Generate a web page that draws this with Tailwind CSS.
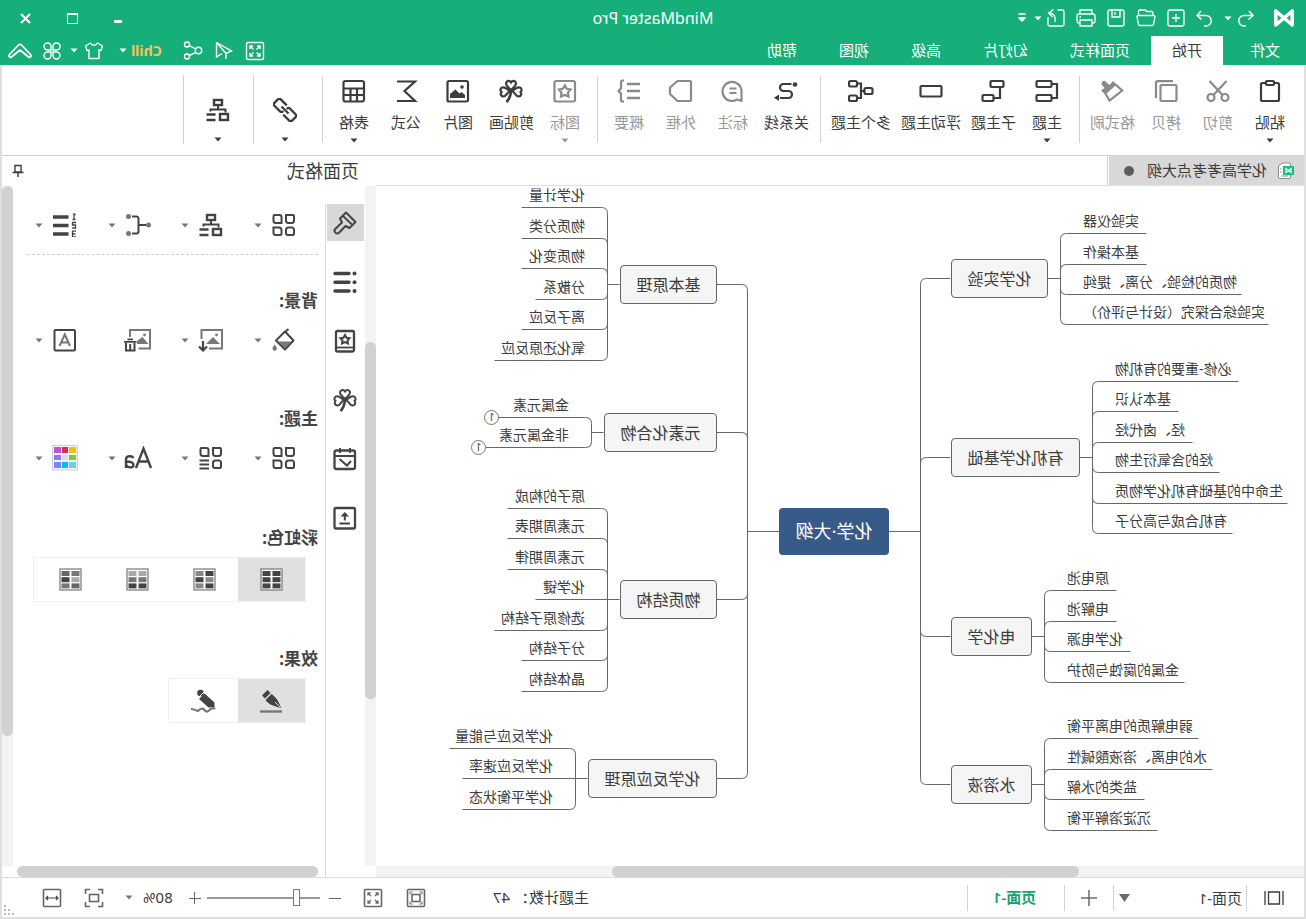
<!DOCTYPE html>
<html lang="zh-CN">
<head>
<meta charset="utf-8">
<title>MindMaster Pro</title>
<script src="https://cdn.jsdelivr.net/npm/@tailwindcss/browser@4"></script>
</head>
<body class="overflow-hidden">

<!-- Icon set, 24-unit grid -->
<svg class="hidden" aria-hidden="true">
  <symbol id="logo" viewBox="0 0 24 24"><path d="M3.800 5V19L20.200 5V19z" stroke-width="3.600" stroke-linejoin="round"/></symbol>
  <symbol id="undo" viewBox="0 0 24 24"><path d="M9 5L5 9.500L9.500 13.500M5 9.500H14a5 5 0 0 1 0 10.500H12" stroke-width="1.500"/></symbol>
  <symbol id="redo" viewBox="0 0 24 24"><path d="M15 5L19 9.500L14.500 13.500M19 9.500H10a5 5 0 0 0 0 10.500H12" stroke-width="1.500"/></symbol>
  <symbol id="new" viewBox="0 0 24 24"><rect x="4" y="4" width="16" height="16" rx="2"/><path d="M12 8v8M8 12h8"/></symbol>
  <symbol id="open" viewBox="0 0 24 24"><path d="M5 9.500V7a1.500 1.500 0 0 1 1.500-1.500H11l2-1.500h5a1.500 1.500 0 0 1 1.500 1.500V9.500M4 9.500H20a1 1 0 0 1 1 1.200L19.500 18.500a1.500 1.500 0 0 1-1.500 1H6a1.500 1.500 0 0 1-1.500-1L3 10.700a1 1 0 0 1 1-1.200z"/></symbol>
  <symbol id="save" viewBox="0 0 24 24"><rect x="4" y="4" width="16" height="16" rx="2"/><path d="M8 4v7h8V4M13 6v3"/></symbol>
  <symbol id="print" viewBox="0 0 24 24"><path d="M6 8V4h12v4M6 17H4.500a1.500 1.500 0 0 1-1.500-1.500V10a2 2 0 0 1 2-2h14a2 2 0 0 1 2 2v5.500a1.500 1.500 0 0 1-1.500 1.500H18M6 14h12v6H6zM17 11h1.500"/></symbol>
  <symbol id="export" viewBox="0 0 24 24"><path d="M10.500 4H5.500A1.500 1.500 0 0 0 4 5.500v13A1.500 1.500 0 0 0 5.500 20h13a1.500 1.500 0 0 0 1.500-1.500V11M13 16c-1-5 1-9 6-9M14.500 3.500L19.500 7L15.500 11"/></symbol>
  <symbol id="caret" viewBox="0 0 8 5"><path d="M.5.5h7L4 4.500z" fill="currentColor" stroke="none"/></symbol>
  <symbol id="more" viewBox="0 0 8 10"><path d="M.5 1h7" stroke-width="1.500"/><path d="M.5 4h7v1.500L4 9 .5 5.500z" fill="currentColor" stroke="none"/></symbol>
  <symbol id="expand" viewBox="0 0 24 24"><rect x="3.500" y="3.500" width="17" height="17" rx="1.500"/><path d="M10.500 10.500L7 7M7 10V7h3M13.500 10.500L17 7M14 7h3v3M10.500 13.500L7 17M7 14v3h3M13.500 13.500L17 17M17 14v3h-3"/></symbol>
  <symbol id="plane" viewBox="0 0 24 24"><path d="M19.500 3.500L4.500 12L10 14.500zM19.500 3.500V18L14 14.500M19.500 3.500L10 14.500V20"/></symbol>
  <symbol id="share" viewBox="0 0 24 24"><circle cx="6.500" cy="11.500" r="3.200"/><circle cx="18" cy="5.500" r="2.500"/><circle cx="18" cy="17.500" r="2.500"/><path d="M9.300 10L15.800 6.500M9 13.300l6.800 3.200"/></symbol>
  <symbol id="shirt" viewBox="0 0 24 24"><path d="M8.500 4C10 7 14 7 15.500 4L20.500 7L19 11.500L17 11V19.500H7V11L5 11.500L3.500 7z" stroke-linejoin="round"/></symbol>
  <symbol id="apps" viewBox="0 0 24 24"><path d="M11 11H7.300A3.500 3.500 0 1 1 11 7.500zM13 11V7.500A3.500 3.500 0 1 1 16.500 11zM11 13V16.500A3.500 3.500 0 1 1 7.500 13zM13 13H16.500A3.500 3.500 0 1 1 13 16.500z"/></symbol>
  <symbol id="collapse" viewBox="0 0 24 24"><path d="M1.500 15.500L10.500 6a2 2 0 0 1 3 0L22.500 15.500a1.500 1.500 0 0 1-2.300 2.200L12 11L3.800 17.700A1.500 1.500 0 0 1 1.500 15.500z" stroke-linejoin="round" stroke-width="1.800"/></symbol>

  <symbol id="paste" viewBox="0 0 24 24"><rect x="3" y="4" width="18" height="18" rx="1.500"/><rect x="8" y="2" width="8" height="4" rx="1" fill="white"/></symbol>
  <symbol id="cut" viewBox="0 0 24 24"><circle cx="5" cy="18.500" r="3.500"/><circle cx="19" cy="18.500" r="3.500"/><path d="M7.500 16L20.500 2M16.500 16L3.500 2"/></symbol>
  <symbol id="copy" viewBox="0 0 24 24"><rect x="1.500" y="6" width="16" height="16" rx="1"/><path d="M5 2.200H20.500a1.500 1.500 0 0 1 1.500 1.500V19"/></symbol>
  <symbol id="painter" viewBox="0 0 24 24"><path d="M9 5L1.800 11.500L14.500 21.500L20 12"/><path d="M11 2L14.500 6L17.500 3.500A2.600 2.600 0 1 1 21.500 6.500L19.500 9L23 11.500L18.500 15.500L7.500 5.500z" fill="currentColor" stroke="none"/></symbol>
  <symbol id="topic" viewBox="0 0 24 24"><rect x="7.500" y="2" width="15" height="6" rx="1"/><rect x="7.500" y="16" width="15" height="6" rx="1"/><path d="M7 5H2V19H7"/></symbol>
  <symbol id="subtopic" viewBox="0 0 24 24"><rect x="1.500" y="2" width="13" height="6" rx="1"/><rect x="11.500" y="16" width="11" height="6" rx="1"/><path d="M5 8V19H11"/></symbol>
  <symbol id="floating" viewBox="0 0 24 24"><rect x="1.500" y="7" width="21" height="10.500" rx="1"/></symbol>
  <symbol id="multi" viewBox="0 0 26 24"><rect x="1.500" y="9" width="8" height="6" rx="1.500"/><rect x="17" y="2" width="8" height="5.500" rx="1.500"/><rect x="17" y="16.500" width="8" height="5.500" rx="1.500"/><path d="M10 12H13M17 4.500H13V19H17"/></symbol>
  <symbol id="relation" viewBox="0 0 24 24"><circle cx="3" cy="5.500" r="2.300" fill="currentColor" stroke="none"/><path d="M17.500 5H9.500a3.500 3.500 0 0 0-3.500 3.500" stroke="none"/><path d="M6.500 5H14.500a3.500 3.500 0 0 1 0 7H9.500a3.500 3.500 0 0 0 0 7H18"/><path d="M19 15.500V22L24 18.700z" fill="currentColor" stroke="none"/></symbol>
  <symbol id="callout" viewBox="0 0 24 24"><path d="M3.500 22V12A9.500 9.500 0 1 1 8 20.500z" stroke-linejoin="round"/><path d="M8.500 9.500h7M8.500 14h7"/></symbol>
  <symbol id="boundary" viewBox="0 0 24 24"><path d="M2 3a1 1 0 0 1 1-1H15.500L23 8.500V15L15.500 22H3a1 1 0 0 1-1-1z" stroke-linejoin="round"/></symbol>
  <symbol id="summary" viewBox="0 0 24 24"><path d="M1 5h13M1 12h13M1 19h13" stroke-width="2.300"/><path d="M17 1.500h1.500a1.500 1.500 0 0 1 1.500 1.500V9.500L22.500 12L20 14.500V21a1.500 1.500 0 0 1-1.500 1.500H17"/></symbol>
  <symbol id="sticker" viewBox="0 0 24 24"><rect x="2" y="2" width="20.500" height="20.500" rx="1.500"/><path d="M12.200 6.500L14.200 9.800L18 10.500L15.500 13.500L16 17.500L12.200 16L8.500 17.500L9 13.500L6.500 10.500L10.300 9.800z"/></symbol>
  <symbol id="clover" viewBox="0 0 24 24"><path d="M12 11C9.500 8 6.500 7 7 4.200C7.500 1.500 10.700 1.200 12 3.400C13.300 1.200 16.500 1.500 17 4.200C17.500 7 14.500 8 12 11zM11.500 12C8 12.500 7.800 17.500 4.500 17.500C2 17.500 1 15 2.500 13C.5 11.200 1.500 8.300 4.300 8.300C7.500 8.300 8.500 11.300 11.500 12zM12.500 12C16 12.500 16.200 17.500 19.500 17.500C22 17.500 23 15 21.500 13C23.500 11.200 22.500 8.300 19.700 8.300C16.500 8.300 15.500 11.300 12.500 12z"/><path d="M12 12C12.500 17 14 20.500 16.500 23" stroke-width="2.600"/></symbol>
  <symbol id="picture" viewBox="0 0 24 24"><rect x="2" y="2" width="20.500" height="20.500" rx="1.500"/><circle cx="8" cy="8" r="1.800" fill="currentColor" stroke="none"/><path d="M5 19V16L8.500 13L10.500 14.500L14.500 10.500L20 15V19z" fill="currentColor" stroke="none"/></symbol>
  <symbol id="formula" viewBox="0 0 24 24"><path d="M21 2.500H3L13.500 12L3 22H21"/></symbol>
  <symbol id="table" viewBox="0 0 24 24"><rect x="2" y="2" width="20.500" height="20.500" rx="2"/><path d="M2 9.500h20M2 16h20M9 9.500v12.500M15.500 9.500v12.500"/></symbol>
  <symbol id="link" viewBox="0 0 24 24"><g transform="rotate(-45 12 12)" stroke-width="2.300"><path d="M10 16.500H1.500a2 2 0 0 1-2-2V9.500a2 2 0 0 1 2-2H9.500a2 2 0 0 1 2 2v.5"/><path d="M14 7.500h8.500a2 2 0 0 1 2 2v5a2 2 0 0 1-2 2H14.500a2 2 0 0 1-2-2v-.5"/><path d="M7 12h10"/></g></symbol>
  <symbol id="layout" viewBox="0 0 24 24"><g stroke-width="2.400"><rect x="8" y="2" width="8" height="5"/><rect x="2" y="16" width="8" height="6"/><path d="M14.500 16.500h9M14.500 22h9"/></g><path d="M12 7V11.500M4.500 14.500V11.500H19.500V13.500"/></symbol>
  <symbol id="grid4" viewBox="0 0 24 24"><path d="M3 2H10V7.500A2.500 2.500 0 0 1 7.500 10H4.500A2.500 2.500 0 0 1 2 7.500V3A1 1 0 0 1 3 2zM16.500 2H21.500a1 1 0 0 1 1 1V7.500A2.500 2.500 0 0 1 20 10H14.500V4a2 2 0 0 1 2-2zM4 14.500H7.500A2.500 2.500 0 0 1 10 17V20a2 2 0 0 1-2 2H3a1 1 0 0 1-1-1V16.500a2 2 0 0 1 2-2zM17 14.500H22.500V20a2 2 0 0 1-2 2H15.500a1 1 0 0 1-1-1V17A2.500 2.500 0 0 1 17 14.500z"/></symbol>
  <symbol id="grid3" viewBox="0 0 24 24"><path d="M3 2H10V7.500A2.500 2.500 0 0 1 7.500 10H4.500A2.500 2.500 0 0 1 2 7.500V3A1 1 0 0 1 3 2zM16.500 2H21.500a1 1 0 0 1 1 1V7.500A2.500 2.500 0 0 1 20 10H14.500V4a2 2 0 0 1 2-2zM4 14.500H7.500A2.500 2.500 0 0 1 10 17V20a2 2 0 0 1-2 2H3a1 1 0 0 1-1-1V16.500a2 2 0 0 1 2-2zM14 14.500h9.500M14 18.500h9.500M14 22.500h9.500"/></symbol>
  <symbol id="branch" viewBox="0 0 26 24"><g fill="#777" stroke="none"><circle cx="2.500" cy="12" r="2.500"/><circle cx="22.500" cy="3.500" r="2.500"/><circle cx="22.500" cy="20.500" r="2.500"/></g><path d="M5 12H12M19 3.500H14.500a2 2 0 0 0-2 2V18.500a2 2 0 0 0 2 2H19"/></symbol>
  <symbol id="numbering" viewBox="0 0 24 24"><path d="M8.500 4H24M8.500 12.500H24M8.500 21H24" stroke-width="3.500"/><path d="M1.500 2L3 .8V6.500M1.500 6.500H4.500M1 9.500H4.500V12H1.500V15H4.800M1 18.200H4.500V24H1M1.500 21H4.500" stroke-width="1.300"/></symbol>
  <symbol id="fill" viewBox="0 0 24 24"><path d="M2.500 12.500L11 3.500L20 12.500L11 21.500z" stroke-linejoin="round"/><path d="M7.500 1L11 4"/><path d="M4.500 13.500H18L11 20.500z" fill="#777" stroke="none"/><path d="M21.300 16.500c1.200 1.800 2.200 2.800 2.200 4a2.200 2.200 0 0 1-4.400 0c0-1.200 1-2.200 2.200-4z" fill="#777" stroke="none"/></symbol>
  <symbol id="picdown" viewBox="0 0 26 24"><g stroke="#777"><path d="M15 20.500H2V2H22.500V11"/></g><path d="M4 16L11 9L18 16z" fill="#777" stroke="none"/><circle cx="7.500" cy="7" r="1.400" fill="#777" stroke="none"/><path d="M21 13V22.500M17 18.500L21 22.500L25 18.500" stroke-width="2.200"/></symbol>
  <symbol id="picdel" viewBox="0 0 28 24"><g stroke="#777"><path d="M13.500 20.500H2V2H22V9"/></g><path d="M3.500 16L9.500 9L15 13V16z" fill="#777" stroke="none"/><circle cx="7.500" cy="7" r="1.400" fill="#777" stroke="none"/><path d="M15.500 13.800H28M19 11.300H24.500" stroke-width="1.800"/><path d="M17.500 15V22.500H26V15M21.800 16V22" stroke-width="2"/></symbol>
  <symbol id="watermark" viewBox="0 0 24 24"><rect x="2" y="2" width="20.500" height="20.500" rx="1"/><path d="M7 18L12.200 6.500L17.500 18M9 14.500H15.500" stroke="#777"/></symbol>
  <symbol id="font" viewBox="0 0 28 24"><path d="M1 22L8.500 2.500L16 22M3.500 15.500H13.500M18.500 12C20 9.500 26 9.500 26 13.500V22M26 15.500C22 15.500 18.500 16.500 18.500 19C18.500 22.500 25 22 26 18.500" stroke-width="2.400"/></symbol>
  <symbol id="palette" viewBox="0 0 26 26"><rect x=".5" y=".5" width="25" height="24.500" fill="#f4f5fa" stroke="#c8cfe6" stroke-width="1"/><g stroke="none"><path d="M2 2h7v6H2z" fill="#f2c200"/><path d="M10 2h6v6h-6z" fill="#dd2a50"/><path d="M17 2h7v6h-7z" fill="#c251cf"/><path d="M2 10h7v5H2z" fill="#74cf3c"/><path d="M10 10h6v5h-6z" fill="#dcdcdc"/><path d="M17 10h7v5h-7z" fill="#9775f0"/><path d="M2 17h7v6H2z" fill="#6bcfe0"/><path d="M10 17h6v6h-6z" fill="#00bdf5"/><path d="M17 17h7v6h-7z" fill="#7b86ff"/></g></symbol>
  <symbol id="brush" viewBox="0 0 24 24"><g stroke-linejoin="round"><path d="M1.500 11L11 1.500L17 7.500L15 11.500L21.800 18A2.700 2.700 0 0 1 18 21.800L11.500 15L7.500 17z"/><path d="M5 13.500L14 5" stroke-width="1.800"/></g></symbol>
  <symbol id="outline" viewBox="0 0 24 24"><g fill="currentColor" stroke="none"><circle cx="2.500" cy="3.500" r="2"/><circle cx="2.500" cy="12.300" r="2"/><circle cx="2.500" cy="21" r="2"/></g><path d="M8 3.500H22M8 12.300H22M8 21H22" stroke-width="3.500" stroke-linecap="round"/></symbol>
  <symbol id="bookstar" viewBox="0 0 24 24"><rect x="3" y="2" width="18" height="20.500" rx="1.500" stroke-width="2.300"/><path d="M3 18.500H21" stroke-width="1.800"/><path d="M12 6L13.600 8.800L16.500 9.300L14.500 11.500L15 14.500L12 13.200L9 14.500L9.500 11.500L7.500 9.300L10.400 8.800z"/></symbol>
  <symbol id="calendar" viewBox="0 0 24 24"><rect x="2" y="3.500" width="20.500" height="18.500" rx="2" stroke-width="2.300"/><path d="M2 9H22M7 1V6M17 1V6M6 14L10 18.500L17.500 12"/></symbol>
  <symbol id="upload" viewBox="0 0 24 24"><rect x="2" y="2" width="20.500" height="20.500" rx="1.500" stroke-width="2.300"/><path d="M7 17.500H17.500M12.200 14.500V9"/><path d="M8 10.500L12.200 6L16.500 10.500z" fill="currentColor" stroke="none"/></symbol>
  <symbol id="pin" viewBox="0 0 12 14"><path d="M3 1.500H9V8H3zM.5 8.500H11.500M6 8.500V13" stroke-width="1.400"/></symbol>
  <symbol id="doc" viewBox="0 0 18 18"><path d="M6 1H13L16.500 4V15.500a1 1 0 0 1-1 1H5.500a1 1 0 0 1-1-1V2a1 1 0 0 1 1-1zM7 14H14M13.500 7H15M13.500 10H15" stroke="#8b8b8b" fill="#fff"/><rect x="1" y="4" width="11" height="9" fill="#11bf83" stroke="none"/><path d="M4 10.500V6.500L9 10.500V6.500z" stroke="#fff" stroke-width="1.200"/></symbol>
  <symbol id="pen" viewBox="0 0 24 24"><g fill="currentColor" stroke="none"><path d="M15.500 1L21 6.500L18 9.500L12.500 4z"/><path d="M11.500 5L17.500 11C15 15.500 9 17 2 19C3.500 13.500 7 8 11.500 5z"/></g><path d="M3 18L8 13" stroke="#e0e0e0" stroke-width="1"/><path d="M1 22.500H23" stroke="#777" stroke-width="2.400"/></symbol>
  <symbol id="pencil" viewBox="0 0 26 24"><g fill="currentColor" stroke="none"><circle cx="15.500" cy="4" r="3.300"/><path d="M11.500 4.500L17 10L7.500 18.500L1.500 18V13.500z"/></g><path d="M12 3L18 9" stroke="#fff" stroke-width="1"/><path d="M1 20C3 18 5 19.500 7 21.500S10.500 22.500 12 20.500S16 20 17.500 21.500S20 20 25 20" stroke="#777" stroke-width="2.200"/></symbol>
  <symbol id="book" viewBox="0 0 20 14"><path d="M1 0V14M19 0V14M4.500 1H15.500V13H4.500z" stroke-width="1.300"/></symbol>
  <symbol id="fit" viewBox="0 0 20 20"><rect x="1.500" y="1.500" width="17" height="17" rx="1"/><rect x="6" y="6.500" width="8" height="7"/><path d="M4 6.500V4H6.500M13.500 4H16V6.500M16 13.500V16H13.500M6.500 16H4V13.500" stroke-width="1"/></symbol>
  <symbol id="full" viewBox="0 0 20 20"><rect x="1.500" y="1.500" width="17" height="17" rx="1"/><path d="M8 8L5 5M5 7.500V5H7.500M12 8L15 5M12.500 5H15V7.500M8 12L5 15M5 12.500V15H7.500M12 12L15 15M15 12.500V15H12.500" stroke-width="1.300"/></symbol>
  <symbol id="select" viewBox="0 0 20 20"><path d="M1.500 6V1.500H6M14 1.500H18.500V6M18.500 14V18.500H14M6 18.500H1.500V14"/><rect x="5.500" y="6.500" width="9" height="7"/></symbol>
  <symbol id="width" viewBox="0 0 20 20"><rect x="1.500" y="1.500" width="17" height="17" rx="1"/><path d="M4 10H16M6 8L4 10L6 12M14 8L16 10L14 12" stroke="#444" stroke-width="1.200"/></symbol>
</svg>

<div class="flex h-screen -scale-x-100 flex-col bg-white font-['Noto_Sans','Noto_Sans_CJK_SC',sans-serif] text-[15px] text-[#3c3c3c]">

  <header class="shrink-0 bg-[#16ae79] text-white">
    <div class="grid h-9 grid-cols-[1fr_auto_1fr] items-center">
      <div class="flex items-center pl-[10px] [&_svg]:fill-none [&_svg]:stroke-current [&_svg]:stroke-[1.300]">
        <svg class="size-6"><use href="#logo"/></svg>
        <button class="ml-[14px] flex" aria-label="撤销"><svg class="size-6"><use href="#undo"/></svg></button>
        <button class="ml-0.5 flex" aria-label="撤销历史"><svg class="h-[5px] w-2"><use href="#caret"/></svg></button>
        <button class="ml-2 flex" aria-label="重做"><svg class="size-6"><use href="#redo"/></svg></button>
        <button class="ml-1 flex" aria-label="新建"><svg class="size-6"><use href="#new"/></svg></button>
        <button class="ml-1.5 flex" aria-label="打开"><svg class="size-6"><use href="#open"/></svg></button>
        <button class="ml-1.5 flex" aria-label="保存"><svg class="size-6"><use href="#save"/></svg></button>
        <button class="ml-1.5 flex" aria-label="打印"><svg class="size-6"><use href="#print"/></svg></button>
        <button class="ml-1.5 flex" aria-label="导出"><svg class="size-6"><use href="#export"/></svg></button>
        <button class="ml-0.5 flex" aria-label="导出选项"><svg class="h-[5px] w-2"><use href="#caret"/></svg></button>
        <button class="ml-2 flex" aria-label="更多"><svg class="h-[10px] w-2"><use href="#more"/></svg></button>
      </div>
      <h1 class="text-[16px] leading-6">MindMaster Pro</h1>
      <div class="flex items-center justify-end gap-9 pr-5">
        <button class="flex h-3 w-2 items-end pb-px" aria-label="最小化"><span class="h-[3px] w-2 bg-white"></span></button>
        <button class="h-[11px] w-[11px] border border-t-2 border-white" aria-label="最大化"></button>
        <button class="flex" aria-label="关闭"><svg class="size-[11px] fill-none stroke-white stroke-2" viewBox="0 0 11 11"><path d="M1 1L10 10M10 1L1 10"/></svg></button>
      </div>
    </div>
    <div class="flex h-[29px]">
      <nav class="flex leading-[29px]">
        <a href="#" class="pr-[27px] pl-[26px]">文件</a>
        <a href="#" class="bg-white px-[21px] text-[#3c3c3c]" aria-current="page">开始</a>
        <a href="#" class="px-[21px]">页面样式</a>
        <a href="#" class="px-[21px]">幻灯片</a>
        <a href="#" class="px-[21px]">高级</a>
        <a href="#" class="px-[21px]">视图</a>
        <a href="#" class="px-[21px]">帮助</a>
      </nav>
      <div class="ml-auto flex items-center pr-2 [&_svg]:fill-none [&_svg]:stroke-current [&_svg]:stroke-[1.400]">
        <button class="flex" aria-label="全屏"><svg class="size-6"><use href="#expand"/></svg></button>
        <button class="ml-[7px] flex" aria-label="发送"><svg class="size-6"><use href="#plane"/></svg></button>
        <button class="ml-[7px] flex" aria-label="分享"><svg class="size-6"><use href="#share"/></svg></button>
        <button class="ml-[19px] flex items-center gap-1 font-bold text-[#f3c45f]"><span class="text-[14px] leading-5">Chill</span><svg class="h-[5px] w-2 text-white"><use href="#caret"/></svg></button>
        <button class="ml-[13px] flex items-center gap-1" aria-label="主题皮肤"><svg class="size-6"><use href="#shirt"/></svg><svg class="h-[5px] w-2"><use href="#caret"/></svg></button>
        <button class="ml-1.5 flex" aria-label="应用"><svg class="size-6"><use href="#apps"/></svg></button>
        <button class="ml-2 flex" aria-label="收起功能区"><svg class="size-6"><use href="#collapse"/></svg></button>
      </div>
    </div>
  </header>

  <div class="flex min-h-0 flex-1 flex-col border-x-2 border-b-2 border-[#dfdfdf]">

    <!-- Ribbon -->
    <div id="ribbon" class="flex h-[91px] shrink-0 border-b border-[#d2d2d2] pl-2"></div>

    <div class="flex min-h-0 flex-1">
      <!-- Document area -->
      <main class="flex min-w-0 flex-1 flex-col">
        <div class="flex h-[30px] shrink-0 border-b border-[#e0e0e0]">
          <button class="flex items-center bg-[#d8d8d8] pr-[15px] pl-[9px]">
            <svg class="mr-[10px] size-[18px] fill-none"><use href="#doc"/></svg>
            <span class="leading-[29px]">化学高考考点大纲</span>
            <span class="ml-[13px] size-[10px] rounded-full bg-[#5c5c5c]"></span>
          </button>
          <span class="ml-px w-px bg-[#d2d2d2]"></span>
        </div>
        <div id="map" class="relative min-h-0 flex-1 overflow-hidden"></div>
        <div class="h-[11px] shrink-0 bg-[#f3f3f3] pl-[225px]"><div class="h-[11px] w-[467px] rounded-full bg-[#d1d1d1]"></div></div>
      </main>

      <!-- Page format panel -->
      <aside class="flex w-[374px] shrink-0 flex-col" aria-label="页面格式">
        <div class="flex h-[30px] shrink-0 items-center pr-[10px] pl-[17px]">
          <h2 class="text-[18px] leading-[30px]">页面格式</h2>
          <button class="ml-auto flex" aria-label="固定面板"><svg class="h-[14px] w-3 fill-none stroke-current"><use href="#pin"/></svg></button>
        </div>
        <div class="flex min-h-0 flex-1">
          <div class="mb-[11px] w-[11px] bg-[#f3f3f3] pt-[156px]"><div class="h-[357px] rounded-full bg-[#d1d1d1]"></div></div>
          <div class="mt-[18px] flex w-10 flex-col gap-[22px] border-r border-[#d9d9d9] pl-px text-[#444] [&_svg]:fill-none [&_svg]:stroke-current [&_svg]:stroke-2">
            <button class="flex size-[37px] items-center justify-center bg-[#d8d8d8]" aria-label="页面格式"><svg class="size-6"><use href="#brush"/></svg></button>
            <button class="flex size-[37px] items-center justify-center" aria-label="大纲"><svg class="size-6"><use href="#outline"/></svg></button>
            <button class="flex size-[37px] items-center justify-center" aria-label="图标"><svg class="size-6"><use href="#bookstar"/></svg></button>
            <button class="flex size-[37px] items-center justify-center" aria-label="剪贴画"><svg class="size-6"><use href="#clover"/></svg></button>
            <button class="flex size-[37px] items-center justify-center" aria-label="任务"><svg class="size-6"><use href="#calendar"/></svg></button>
            <button class="flex size-[37px] items-center justify-center" aria-label="上传"><svg class="size-6"><use href="#upload"/></svg></button>
          </div>
          <div class="flex min-w-0 flex-1 flex-col">
            <div class="min-h-0 flex-1 pt-[23px] pl-[7px] text-[#444] [&_svg]:fill-none [&_svg]:stroke-current [&_svg]:stroke-2">
              <div id="row-layout" class="mr-[14px] flex h-[46px] items-center border-b border-dashed border-[#d0d0d0] pb-[13px] pl-5"></div>
              <h3 class="mt-8 text-[17px] leading-7 font-bold">背景:</h3>
              <div id="row-background" class="flex h-[50px] items-center pl-5"></div>
              <h3 class="mt-10 text-[17px] leading-7 font-bold">主题:</h3>
              <div id="row-theme" class="flex h-[50px] items-center pl-5"></div>
              <h3 class="mt-[41px] text-[17px] leading-7 font-bold">彩虹色:</h3>
              <div id="rainbow" class="mt-[5px] ml-3 flex h-[45px] w-[273px] border border-[#f0f0f0]"></div>
              <h3 class="mt-[43px] text-[17px] leading-7 font-bold">效果:</h3>
              <div class="mt-[5px] ml-3 flex h-[45px] w-[138px] border border-[#f0f0f0]">
                <button class="flex w-[67px] items-center justify-center bg-[#e0e0e0]" aria-label="普通线条"><svg class="size-6"><use href="#pen"/></svg></button>
                <button class="flex flex-1 items-center justify-center" aria-label="手绘线条"><svg class="h-6 w-[26px]"><use href="#pencil"/></svg></button>
              </div>
            </div>
            <div class="mr-1 ml-[7px] h-[11px] shrink-0 rounded-full bg-[#d1d1d1]"></div>
          </div>
          <div class="mb-[11px] w-[11px] shrink-0 bg-[#f3f3f3]"><div class="h-[550px] rounded-full bg-[#d1d1d1]"></div></div>
        </div>
      </aside>
    </div>

    <!-- Status bar -->
    <footer class="flex h-10 shrink-0 items-center border-t border-[#dcdcdc] pl-5 [&_svg]:fill-none [&_svg]:stroke-current">
      <button class="flex" aria-label="页面视图"><svg class="h-[14px] w-5"><use href="#book"/></svg></button>
      <span class="ml-[17px] h-[26px] w-px bg-[#d5d5d5]"></span>
      <div class="flex w-[132px] items-center">
        <select aria-label="页面" class="h-8 w-[132px] appearance-none pl-1 leading-8"><option>页面-1</option></select>
        <svg class="-ml-4 h-2 w-[11px] shrink-0 text-[#6b6b6b]" viewBox="0 0 11 8"><path d="M0 0H11L5.500 8z" fill="currentColor" stroke="none"/></svg>
      </div>
      <span class="h-[26px] w-px bg-[#d5d5d5]"></span>
      <button class="mx-4 flex" aria-label="添加页面"><svg class="size-4 text-[#6b6b6b]" viewBox="0 0 16 16"><path d="M8 0V16M0 8H16" stroke-width="1.500"/></svg></button>
      <span class="h-[26px] w-px bg-[#d5d5d5]"></span>
      <a href="#" class="w-24 pl-[3px] text-center font-semibold text-[#16a36f]">页面-1</a>
      <span class="h-[26px] w-px bg-[#d5d5d5]"></span>
      <p class="mr-auto pl-[378px] whitespace-nowrap">主题计数： 47</p>
      <div class="flex items-center pr-10 text-[#666] [&_svg]:stroke-[1.600]">
        <button class="flex" aria-label="适合页面"><svg class="size-5"><use href="#fit"/></svg></button>
        <button class="ml-[23px] flex" aria-label="全屏"><svg class="size-5"><use href="#full"/></svg></button>
        <button class="ml-[22px] flex" aria-label="缩小"><svg class="size-3" viewBox="0 0 12 12"><path d="M0 6.500H12" stroke-width="1"/></svg></button>
        <input type="range" aria-label="缩放" min="0" max="100" value="19" class="ml-[9px] h-[18px] w-[113px] appearance-none bg-transparent [&::-webkit-slider-runnable-track]:h-0.5 [&::-webkit-slider-runnable-track]:bg-[#999] [&::-webkit-slider-thumb]:-mt-2 [&::-webkit-slider-thumb]:h-[17px] [&::-webkit-slider-thumb]:w-[7px] [&::-webkit-slider-thumb]:appearance-none [&::-webkit-slider-thumb]:border [&::-webkit-slider-thumb]:border-[#777] [&::-webkit-slider-thumb]:bg-white">
        <button class="ml-1.5 flex" aria-label="放大"><svg class="size-3" viewBox="0 0 12 12"><path d="M0 6.500H12M6.500 0V12" stroke-width="1"/></svg></button>
        <button class="ml-4 flex items-center gap-[10px] text-[#3c3c3c]">80%<svg class="h-[5px] w-2 text-[#777]"><use href="#caret"/></svg></button>
        <button class="ml-[21px] flex" aria-label="选区"><svg class="size-5"><use href="#select"/></svg></button>
        <button class="ml-[22px] flex" aria-label="适合宽度"><svg class="size-5"><use href="#width"/></svg></button>
      </div>
      <!-- Resize grip -->
      <svg class="absolute right-0.5 bottom-0.5 size-3 text-[#bbb]" viewBox="0 0 12 12"><path d="M8 0h2v2H8zM4 4h2v2H4zM8 4h2v2H8zM0 8h2v2H0zM4 8h2v2H4zM8 8h2v2H8z" fill="currentColor" stroke="none"/></svg>
    </footer>
  </div>
</div>

<script>
// ---- Ribbon: groups of [icon, label, enabled, hasMenu]
const groups = [
  [['paste','粘贴',1,1],['cut','剪切',0,0],['copy','拷贝',0,0],['painter','格式刷',0,0]],
  [['topic','主题',1,1],['subtopic','子主题',1,0],['floating','浮动主题',1,0],['multi','多个主题',1,0]],
  [['relation','关系线',1,0],['callout','标注',0,0],['boundary','外框',0,0],['summary','概要',0,0]],
  [['sticker','图标',0,1],['clover','剪贴画',1,0],['picture','图片',1,0],['formula','公式',1,0],['table','表格',1,1]]
];
const caret = '<svg class="h-[5px] w-2 fill-none"><use href="#caret"/></svg>';
const sep = '<span class="mt-[11px] mr-1.5 ml-[5px] h-[67px] w-px shrink-0 bg-[#d2d2d2]"></span>';
const sepTight = '<span class="mt-[10px] h-[69px] w-px shrink-0 bg-[#d2d2d2]"></span>';
const tool = ([icon, label, on, menu]) =>
  `<button class="${on ? 'flex min-w-[52px] shrink-0 flex-col items-center px-[5px] pt-[14px] text-[#3c3c3c]' : 'flex min-w-[52px] shrink-0 flex-col items-center px-[5px] pt-[14px] text-[#999]'}"${on ? '' : ' disabled'}>
     <svg class="${on ? 'h-6 w-[26px] fill-none stroke-current stroke-[2.200]' : 'h-6 w-[26px] fill-none stroke-current stroke-[2.200] text-[#8a8a8a]'}"><use href="#${icon}"/></svg>
     <span class="mt-[7px] mb-1 leading-6">${label}</span>${menu ? caret : ''}</button>`;
document.getElementById('ribbon').innerHTML =
  groups.map(g => g.map(tool).join('') + sep).join('') +
  `<button class="flex w-[62px] shrink-0 flex-col items-center gap-[15px] pt-[33px]" aria-label="链接"><svg class="size-6 fill-none stroke-current stroke-2"><use href="#link"/></svg>${caret}</button>` + sepTight +
  `<button class="flex w-[69px] shrink-0 flex-col items-center gap-[15px] pt-[33px]" aria-label="布局"><svg class="size-6 fill-none stroke-current stroke-2"><use href="#layout"/></svg>${caret}</button>` + sepTight;

// ---- Panel icon rows: [icon, label, hasMenu]
const rows = {
  'row-layout': [['grid4','结构',1],['layout','布局',1],['branch','连线',1],['numbering','编号',1]],
  'row-background': [['fill','背景颜色',1],['picdown','背景图片',1],['picdel','移除背景',0],['watermark','水印',1]],
  'row-theme': [['grid4','主题',1],['grid3','主题样式',1],['font','主题字体',1],['palette','主题颜色',1]]
};
for (const id in rows) {
  document.getElementById(id).innerHTML = rows[id].map(([icon, label, menu]) =>
    `<button class="flex w-[73px] shrink-0 items-center gap-2" aria-label="${label}"><svg class="${icon === 'palette' ? 'h-[26px] w-7' : 'h-6 w-7'}"><use href="#${icon}"/></svg>${menu ? '<svg class="h-[5px] w-2 text-[#777]"><use href="#caret"/></svg>' : ''}</button>`).join('');
}

// ---- Rainbow swatches, two columns by three rows of greys
const shades = [
  ['#444','#444','#444','#444','#444','#444'],
  ['#444','#888','#888','#444','#444','#888'],
  ['#aaa','#aaa','#777','#777','#444','#444'],
  ['#777','#666','#aaa','#444','#666','#777']
];
document.getElementById('rainbow').innerHTML = shades.map((s, i) =>
  `<button class="${i ? 'flex w-[67px] items-center justify-center' : 'flex w-[67px] items-center justify-center bg-[#e0e0e0]'}" aria-label="彩虹色 ${i + 1}">
    <svg class="size-[23px]" viewBox="0 0 23 23"><rect x="1" y="1" width="21" height="21" fill="#fff" stroke="#777" stroke-width="1.200"/>` +
    s.map((c, k) => `<rect x="${k % 2 ? 12.5 : 2.5}" y="${3 + (k >> 1) * 6.200}" width="8" height="5" fill="${c}" stroke="none"/>`).join('') +
  '</svg></button>').join('');

// ---- Mind map. side -1 grows left, side 1 grows right
const root = { x: 415, y: 322, w: 110, h: 47, cy: 345 };
const topics = [
  { side: -1, text: '化学实验', edge: 353, w: 97, cy: 92, trunk: 243, kids: [['实验仪器',47,158],['基本操作',78,158],['物质的检验、分离、提纯',108,63],['实验综合探究（设计与评价）',138,36]] },
  { side: -1, text: '有机化学基础', edge: 353, w: 129, cy: 271, trunk: 211, kids: [['必修-重要的有机物',195,66],['基本认识',225,126],['烃、卤代烃',256,112],['烃的含氧衍生物',286,85],['生命中的基础有机化学物质',317,17],['有机合成与高分子',347,72]] },
  { side: -1, text: '电化学', edge: 353, w: 81, cy: 450, trunk: 259, kids: [['原电池',404,188],['电解池',435,188],['化学电源',465,174],['金属的腐蚀与防护',496,120]] },
  { side: -1, text: '水溶液', edge: 353, w: 81, cy: 598, trunk: 259, kids: [['弱电解质的电离平衡',552,106],['水的电离、溶液酸碱性',583,92],['盐类的水解',613,160],['沉淀溶解平衡',644,147]] },
  { side: 1, text: '基本原理', edge: 587, w: 97, cy: 98, trunk: 697, kids: [['化学计量',21,783],['物质分类',52,783],['物质变化',82,783],['分散系',113,769],['离子反应',143,783],['氧化还原反应',174,810]] },
  { side: 1, text: '元素化合物', edge: 587, w: 113, cy: 246, trunk: 713, kids: [['金属元素',231,806,1],['非金属元素',261,819,1]] },
  { side: 1, text: '物质结构', edge: 587, w: 97, cy: 413, trunk: 697, kids: [['原子的构成',322,797],['元素周期表',352,797],['元素周期律',383,797],['化学键',413,769],['选修原子结构',444,810],['分子结构',474,783],['晶体结构',505,783]] },
  { side: 1, text: '化学反应原理', edge: 587, w: 129, cy: 592, trunk: 729, kids: [['化学反应与能量',562,855],['化学反应速率',592,842],['化学平衡状态',623,842]] }
];
const p = v => v + .5;
// Elbow from (x, y0) along the vertical, rounded into a horizontal at y1 that ends at x1
const elbow = (x, y0, y1, x1) => {
  if (y0 === y1) return `M${p(x)} ${p(y0)}H${p(x1)}`;
  const v = Math.sign(y1 - y0) * 6, s = Math.sign(x1 - x) * 6;
  return `M${p(x)} ${p(y0)}V${p(y1 - v)}Q${p(x)} ${p(y1)} ${p(x + s)} ${p(y1)}H${p(x1)}`;
};
let d = '', nodes = '';
for (const t of topics) {
  const spine = t.side < 0 ? 383 : 556;
  d += `M${p(root.x + root.w / 2)} ${p(root.cy)}H${p(spine)}` + elbow(spine, root.cy, t.cy, t.edge);
  const far = t.edge + t.side * t.w;
  const stem = t.side < 0 ? t.trunk : t.trunk - 1;
  d += `M${p(far)} ${p(t.cy)}H${p(stem)}`;
  nodes += `<div class="absolute flex h-[39px] items-center justify-center rounded border border-[#666] bg-[#f5f5f5] text-[16px] whitespace-nowrap" style="left:${Math.min(t.edge, far)}px;top:${t.cy - 19}px;width:${t.w}px">${t.text}</div>`;
  for (const [text, y, end, badge] of t.kids) {
    d += elbow(stem, t.cy, y, end - 1);
    const x = t.trunk + t.side * 22;
    nodes += t.side < 0
      ? `<div class="absolute flex w-60 justify-end text-[14px] leading-5 whitespace-nowrap" style="left:${x - 240}px;top:${y - 22}px">${text}</div>`
      : `<div class="absolute w-60 text-[14px] leading-5 whitespace-nowrap" style="left:${x}px;top:${y - 22}px">${text}</div>`;
    if (badge) nodes += `<button class="absolute size-[15px] rounded-full border border-[#777] bg-white text-center text-[10px] leading-[13px]" style="left:${end - 1}px;top:${y - 7}px">${badge}</button>`;
  }
}
document.getElementById('map').innerHTML =
  `<svg class="absolute inset-0 h-full w-full fill-none stroke-[#666] stroke-1"><path d="${d}"/></svg>${nodes}` +
  `<div class="absolute flex items-center justify-center rounded bg-[#365b89] text-[18px] whitespace-nowrap text-white" style="left:${root.x}px;top:${root.y}px;width:${root.w}px;height:${root.h}px">化学·大纲</div>`;
</script>
</body>
</html>
